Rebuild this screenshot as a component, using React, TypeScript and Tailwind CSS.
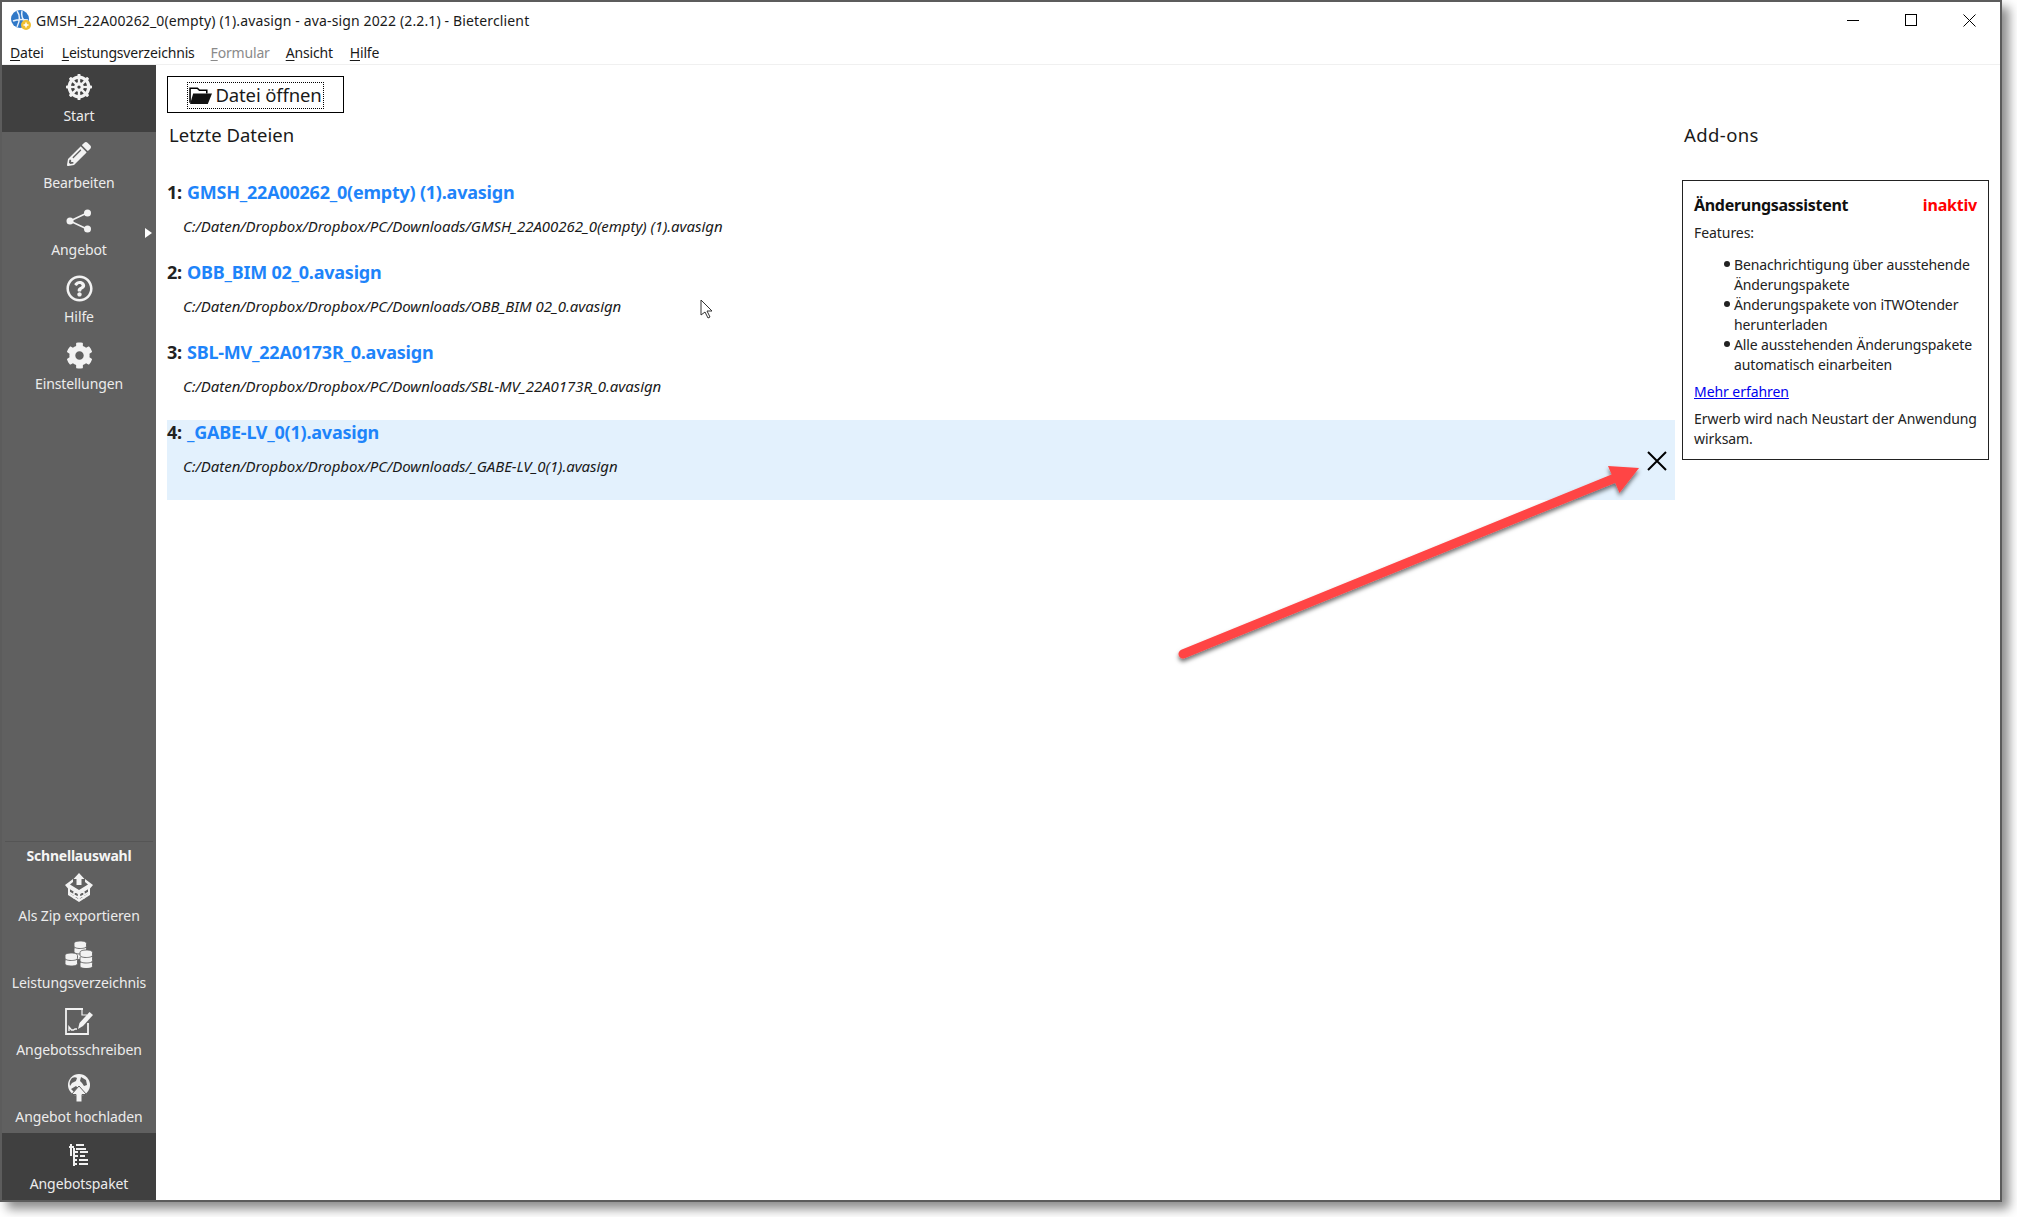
import React from 'react';
import { FaDharmachakra, FaPencilAlt, FaRegQuestionCircle, FaCog } from 'react-icons/fa';

const ShareIcon = () => (
  <svg width="26" height="24" viewBox="0 0 26 24" fill="#f2f2f2" stroke="#f2f2f2">
    <path d="M4 12L21 4M4 12l17 8" strokeWidth="1.600" fill="none" />
    <circle cx="4" cy="12" r="3.500" stroke="none" />
    <circle cx="21.500" cy="4" r="3.500" stroke="none" />
    <circle cx="21.500" cy="20" r="3.500" stroke="none" />
  </svg>
);

const BoxIcon = () => (
  <svg width="28" height="29" viewBox="0 0 28 29">
    <path d="M14 0l5.500 6h-3v6h-5V6h-3z" fill="#f2f2f2" />
    <path d="M8 6L0 12l3 3.500V22l11 7 11-7v-6.500L28 12l-8-6v3l3 2.500-9 5.500-9-5.500L8 9z" fill="#f2f2f2" />
    <path d="M5 15l9 5.500 9-5.500v5.500l-9 6-9-6z" fill="#606060" />
    <path d="M4.500 15l9 5.500v7M23.500 15l-9 5.500v7M9 17.500v8M19 17.500v8M4.500 19.500l9.500 5.500 9.500-5.500" stroke="#f2f2f2" strokeWidth="1.500" fill="none" />
  </svg>
);

const Stack = ({ x, y, n }: { x: number; y: number; n: number }) => (
  <g>
    {Array.from({ length: n }).map((_, i) => (
      <path
        key={i}
        d={`M${x} ${y + (n - 1 - i) * 5.500 + 2.500}c0-1.800 3-2.500 6.250-2.500s6.250 0.700 6.250 2.500v2.500c0 1.800-3 2.500-6.250 2.500s-6.250-0.700-6.250-2.500z`}
        fill="#f2f2f2"
        stroke="#606060"
        strokeWidth="0.900"
      />
    ))}
  </g>
);

const CoinsIcon = () => (
  <svg width="28" height="27" viewBox="0 0 28 27">
    <Stack x={9} y={0} n={3} />
    <Stack x={15} y={9} n={3} />
    <Stack x={0} y={12} n={2} />
  </svg>
);

const SignIcon = () => (
  <svg width="29" height="27" viewBox="0 0 29 27" fill="none" stroke="#f2f2f2">
    <path d="M18 1H1v25h22V15" strokeWidth="1.800" />
    <path d="M17 1v6h5" strokeWidth="1.200" />
    <path d="M13 21l1.500-6L24.500 4l3.500 3-10 11z" fill="#f2f2f2" stroke="none" />
    <path d="M4 23v-4l2.500 3h2l1.500-1h2" strokeWidth="1.400" />
  </svg>
);

const GlobeIcon = () => (
  <svg width="24" height="28" viewBox="0 0 24 28">
    <circle cx="12" cy="11" r="11" fill="#f2f2f2" />
    <path d="M5 4c2-1 4-1 5 0l-1 3-4 2-2 3c-1-3 0-6 2-8zM14 3l5 3 1 5-3 1-2-3-2-2zM4 15l5-3 2 2-3 5z" fill="#606060" />
    <path d="M6.500 21l5.500-8 5.500 8" fill="#606060" />
    <path d="M12 12l7.500 8.500H15V28H9v-7.500H4.500z" fill="#f2f2f2" stroke="#606060" />
  </svg>
);

const TreeIcon = () => (
  <svg width="20" height="22" viewBox="0 0 20 22" fill="none" stroke="#f2f2f2" strokeWidth="2">
    <path d="M2 0v12M0 3h5M7 1h8M7 5h10M4 8h5M11 8h8M4 12h5M11 12h5M5 4v18M5 16h3M5 20h3M10 16h9M10 20h9" />
  </svg>
);

const navItems = [
  { label: 'Start', icon: <FaDharmachakra size={26} />, active: true },
  { label: 'Bearbeiten', icon: <FaPencilAlt size={24} /> },
  { label: 'Angebot', icon: <ShareIcon />, arrow: true },
  { label: 'Hilfe', icon: <FaRegQuestionCircle size={27} /> },
  { label: 'Einstellungen', icon: <FaCog size={27} /> },
];

const quickItems = [
  { label: 'Als Zip exportieren', icon: <BoxIcon /> },
  { label: 'Leistungsverzeichnis', icon: <CoinsIcon /> },
  { label: 'Angebotsschreiben', icon: <SignIcon /> },
  { label: 'Angebot hochladen', icon: <GlobeIcon /> },
  { label: 'Angebotspaket', icon: <TreeIcon />, active: true },
];

const recentFiles = [
  { name: 'GMSH_22A00262_0(empty) (1).avasign', hovered: false },
  { name: 'OBB_BIM 02_0.avasign', hovered: false },
  { name: 'SBL-MV_22A0173R_0.avasign', hovered: false },
  { name: '_GABE-LV_0(1).avasign', hovered: true },
];

const features = [
  'Benachrichtigung über ausstehende Änderungspakete',
  'Änderungspakete von iTWOtender herunterladen',
  'Alle ausstehenden Änderungspakete automatisch einarbeiten',
];

type NavProps = { label: string; icon: React.ReactNode; active?: boolean; arrow?: boolean };

const NavItem = ({ label, icon, active, arrow }: NavProps) => (
  <div className={`relative h-[67px] flex flex-col items-center text-[14px] tracking-[-0.1px] text-[#ececec] ${active ? 'bg-[#404040]' : ''}`}>
    <div className="h-[44px] flex items-center justify-center text-[#f2f2f2]">{icon}</div>
    <div className="leading-[14px]">{label}</div>
    {arrow && <div className="absolute left-[143px] top-[29px] w-0 h-0 border-y-[5px] border-y-transparent border-l-[7px] border-l-white" />}
  </div>
);

const MenuLabel = ({ first, rest, dim, className }: { first: string; rest: string; dim?: boolean; className?: string }) => (
  <span className={`${dim ? 'text-[#8a8a8a]' : 'text-[#1a1a1a]'} ${className ?? ''}`}>
    <span className="underline underline-offset-2">{first}</span>
    {rest}
  </span>
);

export default function App() {
  return (
    <div className="w-[2017px] h-[1217px] bg-white overflow-hidden font-['Noto_Sans',sans-serif]">
      <div className="relative w-[2002px] h-[1202px] border-2 border-[#5c5c5c] bg-white flex flex-col shadow-[7px_7px_10px_rgba(0,0,0,0.45)]">
        {/* Title bar */}
        <div className="h-[36px] flex items-center text-[14px] tracking-[0.14px] text-[#1a1a1a] pl-[8px]">
          <svg width="22" height="22" viewBox="0 0 22 22" className="mr-[4px]">
            <circle cx="10" cy="10" r="9" fill="#2f78c8" />
            <path d="M7 2c3 4 3 10 0 16M12 2c-1 4 0 8 4 12M3 12c4-2 9-2 15-1" stroke="#e8f1fb" strokeWidth="1.500" fill="none" />
            <circle cx="16" cy="16" r="5" fill="#f0c030" />
            <path d="M16 13.500v5M13.500 16h5" stroke="#fff" strokeWidth="1.500" />
          </svg>
          <span>GMSH_22A00262_0(empty) (1).avasign - ava-sign 2022 (2.2.1) - Bieterclient</span>
          <div className="ml-auto flex items-center mr-[24px] gap-[46px]">
            <div className="w-[12px] h-px bg-black" />
            <div className="w-[12px] h-[12px] border border-black" />
            <svg width="13" height="13" viewBox="0 0 13 13" stroke="black" strokeWidth="1">
              <path d="M0.500 0.500l12 12M12.500 0.500l-12 12" />
            </svg>
          </div>
        </div>
        {/* Menu */}
        <div className="h-[27px] border-b border-[#f0f0f0] flex items-center text-[14px] tracking-[-0.18px] pl-[8px] gap-[16px] pt-[3px]">
          <MenuLabel first="D" rest="atei" className="mr-[2px]" />
          <MenuLabel first="L" rest="eistungsverzeichnis" />
          <MenuLabel first="F" rest="ormular" dim />
          <MenuLabel first="A" rest="nsicht" className="mr-[1px]" />
          <MenuLabel first="H" rest="ilfe" />
        </div>
        <div className="flex-1 flex min-h-0">
          {/* Sidebar */}
          <div className="w-[154px] bg-[#606060] flex flex-col justify-between">
            <div>
              {navItems.map((item) => (
                <NavItem key={item.label} {...item} />
              ))}
            </div>
            <div>
              <div className="mx-[3px] h-px bg-[#555555]" />
              <div className="h-[23px] pt-[4px] text-center text-[14px] font-bold leading-[19px] tracking-[-0.22px] text-[#f5f5f5]">Schnellauswahl</div>
              {quickItems.map((item) => (
                <NavItem key={item.label} {...item} />
              ))}
            </div>
          </div>
          {/* Main */}
          <div className="flex-1 flex pl-[11px] pt-[11px] gap-[7px]">
            <div className="w-[1508px]">
              <button className="w-[177px] h-[37px] border border-black flex items-center justify-center pt-[1px]">
                <span className="flex items-center gap-[3px] h-[27px] px-[1px] border border-dotted border-black text-[18.500px] tracking-[-0.15px] text-[#1a1a1a]">
                  <svg width="23" height="20" viewBox="0 0 22 19">
                    <path d="M1 17V3h7l2 2h7v3" fill="none" stroke="black" strokeWidth="1.500" />
                    <path d="M4 8h18l-4 10H1z" fill="#111" />
                  </svg>
                  Datei öffnen
                </span>
              </button>
              <div className="h-[67px] pt-[10px] pl-[2px] text-[18.500px] leading-[24px] text-[#1a1a1a]">Letzte Dateien</div>
              {recentFiles.map((file, i) => (
                <div key={file.name} className={`relative h-[80px] ${file.hovered ? 'bg-[#e3f1fd]' : ''}`}>
                  <div className="flex text-[18px] font-bold leading-[24px] tracking-[-0.22px]">
                    <span className="w-[20px] text-[#222222]">{i + 1}:</span>
                    <span className="text-[#1e84fa]">{file.name}</span>
                  </div>
                  <div className="mt-[9px] pl-[16px] text-[15px] italic leading-[26px] tracking-[-0.05px] text-[#1a1a1a]">
                    C:/Daten/Dropbox/Dropbox/PC/Downloads/{file.name}
                  </div>
                  {file.hovered && (
                    <svg width="20" height="20" viewBox="0 0 20 20" stroke="black" strokeWidth="2" className="absolute right-[8px] top-[31px]">
                      <path d="M1 1l18 18M19 1L1 19" />
                    </svg>
                  )}
                </div>
              ))}
            </div>
            {/* Add-ons */}
            <div className="w-[307px]">
              <div className="h-[37px]" />
              <div className="h-[67px] pt-[10px] pl-[2px] text-[18.500px] leading-[24px] tracking-[0.4px] text-[#1a1a1a]">Add-ons</div>
              <div className="h-[280px] border border-[#222222] pl-[11px] pr-[11px] pt-[12px] text-[14px] leading-[20px] tracking-[-0.06px] text-[#222222]">
                <div className="flex justify-between items-center h-[24px]">
                  <span className="text-[16px] font-bold tracking-[-0.3px] text-[#111111]">Änderungsassistent</span>
                  <span className="text-[16px] font-bold tracking-[-0.2px] text-[#ff0000]">inaktiv</span>
                </div>
                <div className="mt-[6px]">Features:</div>
                <ul className="mt-[12px] pl-[30px]">
                  {features.map((text) => (
                    <li key={text} className="flex gap-[4px]">
                      <span className="mt-[6px] w-[6px] h-[6px] shrink-0 rounded-full bg-[#222222]" />
                      <span className="tracking-[-0.12px]">{text}</span>
                    </li>
                  ))}
                </ul>
                <a className="block mt-[7px] text-[#0000ee] underline">Mehr erfahren</a>
                <p className="mt-[7px]">Erwerb wird nach Neustart der Anwendung wirksam.</p>
              </div>
            </div>
          </div>
        </div>
        {/* Mouse pointer */}
        <svg width="14" height="20" viewBox="0 0 14 20" className="absolute left-[698px] top-[297px]">
          <path d="M1 1v15l4-3 3 6 2-1-3-6h5z" fill="white" stroke="#333" strokeWidth="1" />
        </svg>
        {/* Annotation arrow */}
        <svg width="520" height="240" viewBox="0 0 520 240" className="absolute left-[1148px] top-[438px]" fill="none">
          <defs>
            <filter id="arrowShadow" x="-10%" y="-10%" width="120%" height="130%">
              <feDropShadow dx="0" dy="3" stdDeviation="2" floodColor="#000" floodOpacity="0.55" />
            </filter>
          </defs>
          <g filter="url(#arrowShadow)">
            <path d="M33 214L470 36" stroke="#ff4545" strokeWidth="9" strokeLinecap="round" />
            <path d="M489 28L458 26L469.500 53z" fill="#ff4545" />
          </g>
        </svg>
      </div>
    </div>
  );
}
